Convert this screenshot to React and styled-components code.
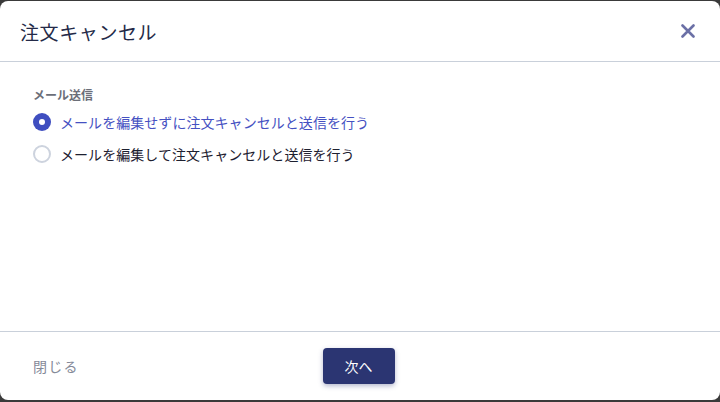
import React, { useState } from 'react'
import styled, { createGlobalStyle } from 'styled-components'

const GlobalStyle = createGlobalStyle`
  html, body {
    margin: 0;
    padding: 0;
    background: #3a3a3a;
    font-family: "Noto Sans CJK JP", "Noto Sans", sans-serif;
  }
`;

const Backdrop = styled.div`
  width: 720px;
  height: 402px;
  padding: 1px 0 2px;
  box-sizing: border-box;
  background: #3a3a3a;
`;

const Modal = styled.div`
  height: 100%;
  background: #fff;
  border-radius: 8px;
  display: flex;
  flex-direction: column;
  overflow: hidden;
`;

const Header = styled.div`
  height: 60px;
  flex: none;
  display: flex;
  align-items: center;
  justify-content: space-between;
  padding: 0 22px 0 20px;
  border-bottom: 1px solid #c9d0da;
`;

const Title = styled.h1`
  margin: 0;
  font-size: 19px;
  font-weight: 400;
  color: #242a48;
  letter-spacing: 0.6px;
`;

const CloseButton = styled.button`
  border: none;
  background: none;
  padding: 0;
  width: 20px;
  height: 20px;
  display: flex;
  align-items: center;
  justify-content: center;
  cursor: pointer;
`;

const Body = styled.div`
  flex: 1;
  padding: 25px 33px 0;
`;

const Label = styled.div`
  font-size: 12px;
  font-weight: 700;
  color: #6b6e78;
  line-height: 16px;
  margin-bottom: 3px;
`;

const Option = styled.label`
  display: flex;
  align-items: center;
  gap: 9px;
  height: 32px;
  font-size: 14px;
  letter-spacing: 0.05px;
  color: ${p => (p.$checked ? '#4551c2' : '#1d2030')};
  cursor: pointer;
`;

const Radio = styled.span`
  width: 18px;
  height: 18px;
  box-sizing: border-box;
  border-radius: 50%;
  flex: none;
  display: flex;
  align-items: center;
  justify-content: center;
  background: ${p => (p.$checked ? '#3f4ec0' : '#fff')};
  border: ${p => (p.$checked ? 'none' : '2px solid #cdd3de')};

  &::after {
    content: '';
    width: 6px;
    height: 6px;
    border-radius: 50%;
    background: #fff;
    display: ${p => (p.$checked ? 'block' : 'none')};
  }
`;

const Footer = styled.div`
  height: 68px;
  flex: none;
  border-top: 1px solid #c9d0da;
  display: flex;
  align-items: center;
  padding: 0 33px;
  gap: 244px;
`;

const TextButton = styled.button`
  border: none;
  background: none;
  padding: 0;
  font-family: inherit;
  font-size: 14px;
  color: #858a99;
  letter-spacing: 1.2px;
  cursor: pointer;
`;

const PrimaryButton = styled.button`
  width: 72px;
  height: 36px;
  border: none;
  border-radius: 4px;
  background: #2b3572;
  color: #fff;
  font-family: inherit;
  font-size: 14px;
  box-shadow: 0 2px 5px rgba(43, 53, 114, 0.35);
  cursor: pointer;
`;

const options = [
  'メールを編集せずに注文キャンセルと送信を行う',
  'メールを編集して注文キャンセルと送信を行う',
];

const App = () => {
  const [selected, setSelected] = useState(0);

  return (
    <>
      <GlobalStyle />
      <Backdrop>
        <Modal>
          <Header>
            <Title>注文キャンセル</Title>
            <CloseButton aria-label="閉じる">
              <svg width="14" height="14" viewBox="0 0 14 14">
                <path d="M1.5 1.5 L12.5 12.5 M12.5 1.5 L1.5 12.5" stroke="#6b70a6" strokeWidth="2.6" strokeLinecap="round" />
              </svg>
            </CloseButton>
          </Header>
          <Body>
            <Label>メール送信</Label>
            {options.map((text, i) => (
              <Option key={i} $checked={selected === i} onClick={() => setSelected(i)}>
                <Radio $checked={selected === i} />
                {text}
              </Option>
            ))}
          </Body>
          <Footer>
            <TextButton>閉じる</TextButton>
            <PrimaryButton>次へ</PrimaryButton>
          </Footer>
        </Modal>
      </Backdrop>
    </>
  )
}

export default App
